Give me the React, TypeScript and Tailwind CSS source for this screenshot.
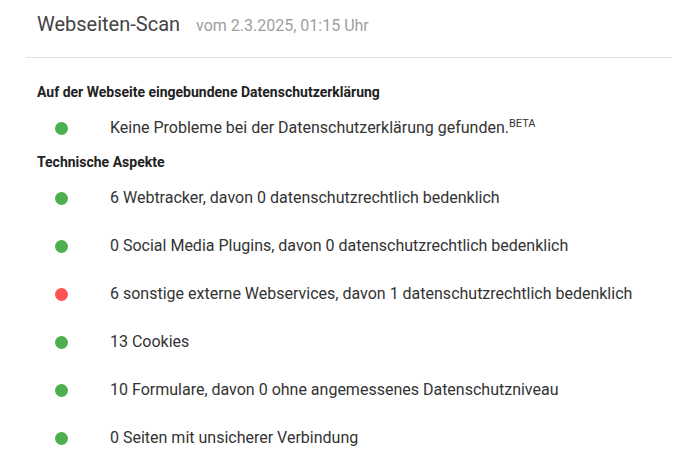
const ROWS: { ok: boolean; text: string }[] = [
  { ok: true, text: "6 Webtracker, davon 0 datenschutzrechtlich bedenklich" },
  { ok: true, text: "0 Social Media Plugins, davon 0 datenschutzrechtlich bedenklich" },
  { ok: false, text: "6 sonstige externe Webservices, davon 1 datenschutzrechtlich bedenklich" },
  { ok: true, text: "13 Cookies" },
  { ok: true, text: "10 Formulare, davon 0 ohne angemessenes Datenschutzniveau" },
  { ok: true, text: "0 Seiten mit unsicherer Verbindung" },
];

function Dot({ ok }: { ok: boolean }) {
  return (
    <span className="w-[73px] shrink-0 flex items-center">
      <span
        className={`ml-[18px] w-[13px] h-[13px] rounded-full ${ok ? "bg-[#4caf50]" : "bg-[#ff5252]"}`}
      />
    </span>
  );
}

export default function App() {
  return (
    <div className="w-[700px] h-[467px] bg-white overflow-hidden font-['Roboto',sans-serif]">
      {/* Header */}
      <div className="ml-[26px] w-[646px] h-[58px] box-border border-b border-[#e0e0e0] pt-[10px] pl-[11px] flex items-baseline gap-[16px]">
        <span className="text-[20px] leading-[28px] text-[#444]">Webseiten-Scan</span>
        <span className="text-[16px] text-[#9e9e9e]">vom 2.3.2025, 01:15 Uhr</span>
      </div>

      <div className="pl-[37px]">
        <div className="mt-[24px] text-[14px] leading-[20px] font-bold text-[#222]">
          Auf der Webseite eingebundene Datenschutzerklärung
        </div>
        <div className="flex items-center h-[46px] mt-[3px]">
          <Dot ok />
          <span className="text-[16px] text-[#333]">
            Keine Probleme bei der Datenschutzerklärung gefunden.
            <sup className="text-[11px] relative -top-[6px]">BETA</sup>
          </span>
        </div>

        <div className="mt-[1px] text-[14px] leading-[20px] font-bold text-[#222]">Technische Aspekte</div>

        <div className="mt-[2px] flex flex-col">
          {ROWS.map((r) => (
            <div key={r.text} className="flex items-center h-[48px]">
              <Dot ok={r.ok} />
              <span className="text-[16px] text-[#333]">{r.text}</span>
            </div>
          ))}
        </div>
      </div>
    </div>
  );
}
